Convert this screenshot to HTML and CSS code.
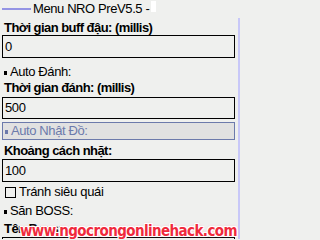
FILE: index.html
```html
<!DOCTYPE html>
<html>
<head>
<meta charset="utf-8">
<link rel="stylesheet" href="styles.css">
</head>
<body>
<div class="page">
  <div class="main">
    <div class="title">
      <span class="title-line"></span>
      <span class="title-text">Menu NRO PreV5.5 -</span>
      <span class="title-glitch"></span>
    </div>
    <div class="label l1">Thời gian buff đậu: (millis)</div>
    <div class="input">0</div>
    <div class="item i1"><span class="bullet"></span>Auto Đánh:</div>
    <div class="label l2">Thời gian đánh: (millis)</div>
    <div class="input in2">500</div>
    <div class="item boxed"><span class="bullet"></span>Auto Nhật Đồ:</div>
    <div class="label l3">Khoảng cách nhặt:</div>
    <div class="input in3">100</div>
    <div class="check"><span class="checkbox"></span>Tránh siêu quái</div>
    <div class="item i2"><span class="bullet"></span>Săn BOSS:</div>
    <div class="label l4">Tên Boss:</div>
    <div class="input in4"></div>
  </div>
  <div class="scrollbar"></div>
  <div class="watermark">www.ngocrongonlinehack.com</div>
</div>
</body>
</html>
```
FILE: styles.css
```css
html, body {
  margin: 0;
  padding: 0;
  background: #eff0ee;
  overflow: hidden;
}
.page {
  position: relative;
  width: 240px;
  height: 239px;
  display: flex;
  align-items: flex-start;
  overflow: hidden;
  font-family: "Liberation Sans", Arial, sans-serif;
  color: #000;
}
.main {
  width: 237px;
  flex-shrink: 0;
  display: flex;
  flex-direction: column;
}
.main > * {
  flex-shrink: 0;
}
.title {
  height: 21px;
  display: flex;
  align-items: flex-start;
}
.title-line {
  width: 29px;
  height: 2px;
  background: #9494e4;
  margin: 8px 0 0 2px;
}
.title-text {
  font-size: 13px;
  letter-spacing: -0.4px;
  line-height: 14px;
  margin: 2px 0 0 2px;
}
.title-glitch {
  width: 5px;
  height: 11px;
  background: #ffffff;
  margin: 1px 0 0 2px;
}
.label {
  font-size: 13px;
  letter-spacing: -0.55px;
  font-weight: bold;
  line-height: 14px;
  padding-left: 4px;
  white-space: nowrap;
}
.input {
  box-sizing: border-box;
  height: 23px;
  width: 233px;
  margin-left: 2px;
  border: 1px solid #000;
  font-size: 13px;
  letter-spacing: -0.4px;
  line-height: 21px;
  padding-left: 2px;
}
.item {
  font-size: 13px;
  letter-spacing: -0.4px;
  line-height: 16px;
  padding-left: 4px;
  display: flex;
  align-items: center;
  white-space: nowrap;
}
.bullet {
  width: 3px;
  height: 4px;
  background: #000;
  margin: 2px 3px 0 0;
}
.i1 { margin-top: 6px; }
.l2 { margin-top: 1px; }
.in2 { margin-top: 2px; height: 22px; line-height: 20px; }
.boxed {
  box-sizing: border-box;
  margin-top: 3px;
  margin-left: 2px;
  width: 233px;
  height: 18px;
  border: 1px solid #6c7aab;
  background: #e1e1e1;
  color: #6c7aab;
  padding-left: 2px;
}
.boxed .bullet { background: #6c7aab; }
.l3 { margin-top: 4px; }
.in3 { margin-top: 1px; }
.check {
  margin-top: 2px;
  font-size: 13px;
  letter-spacing: -0.3px;
  line-height: 16px;
  display: flex;
  align-items: center;
  padding-left: 5px;
}
.checkbox {
  box-sizing: border-box;
  width: 11px;
  height: 11px;
  border: 1px solid #000;
  margin: 1px 3px 0 0;
}
.i2 { margin-top: 3px; }
.l4 { margin-top: 3px; }
.in4 { margin-top: 1px; }
.scrollbar {
  width: 2px;
  height: 221px;
  margin-top: 18px;
  margin-left: 1px;
  background: #c8c8f8;
}
.watermark {
  position: absolute;
  left: 20px;
  top: 221px;
  font-family: "DejaVu Sans", sans-serif;
  font-weight: bold;
  font-size: 13.5px;
  letter-spacing: -0.6px;
  line-height: 16px;
  color: #f02a3c;
  transform: scaleY(1.15);
  transform-origin: left top;
  text-shadow:
    1px 0 0 #fff, -1px 0 0 #fff, 0 1px 0 #fff, 0 -1px 0 #fff,
    1px 1px 0 #fff, -1px -1px 0 #fff, 1px -1px 0 #fff, -1px 1px 0 #fff,
    0 0 3px #f7a0b0;
  white-space: nowrap;
}
```
